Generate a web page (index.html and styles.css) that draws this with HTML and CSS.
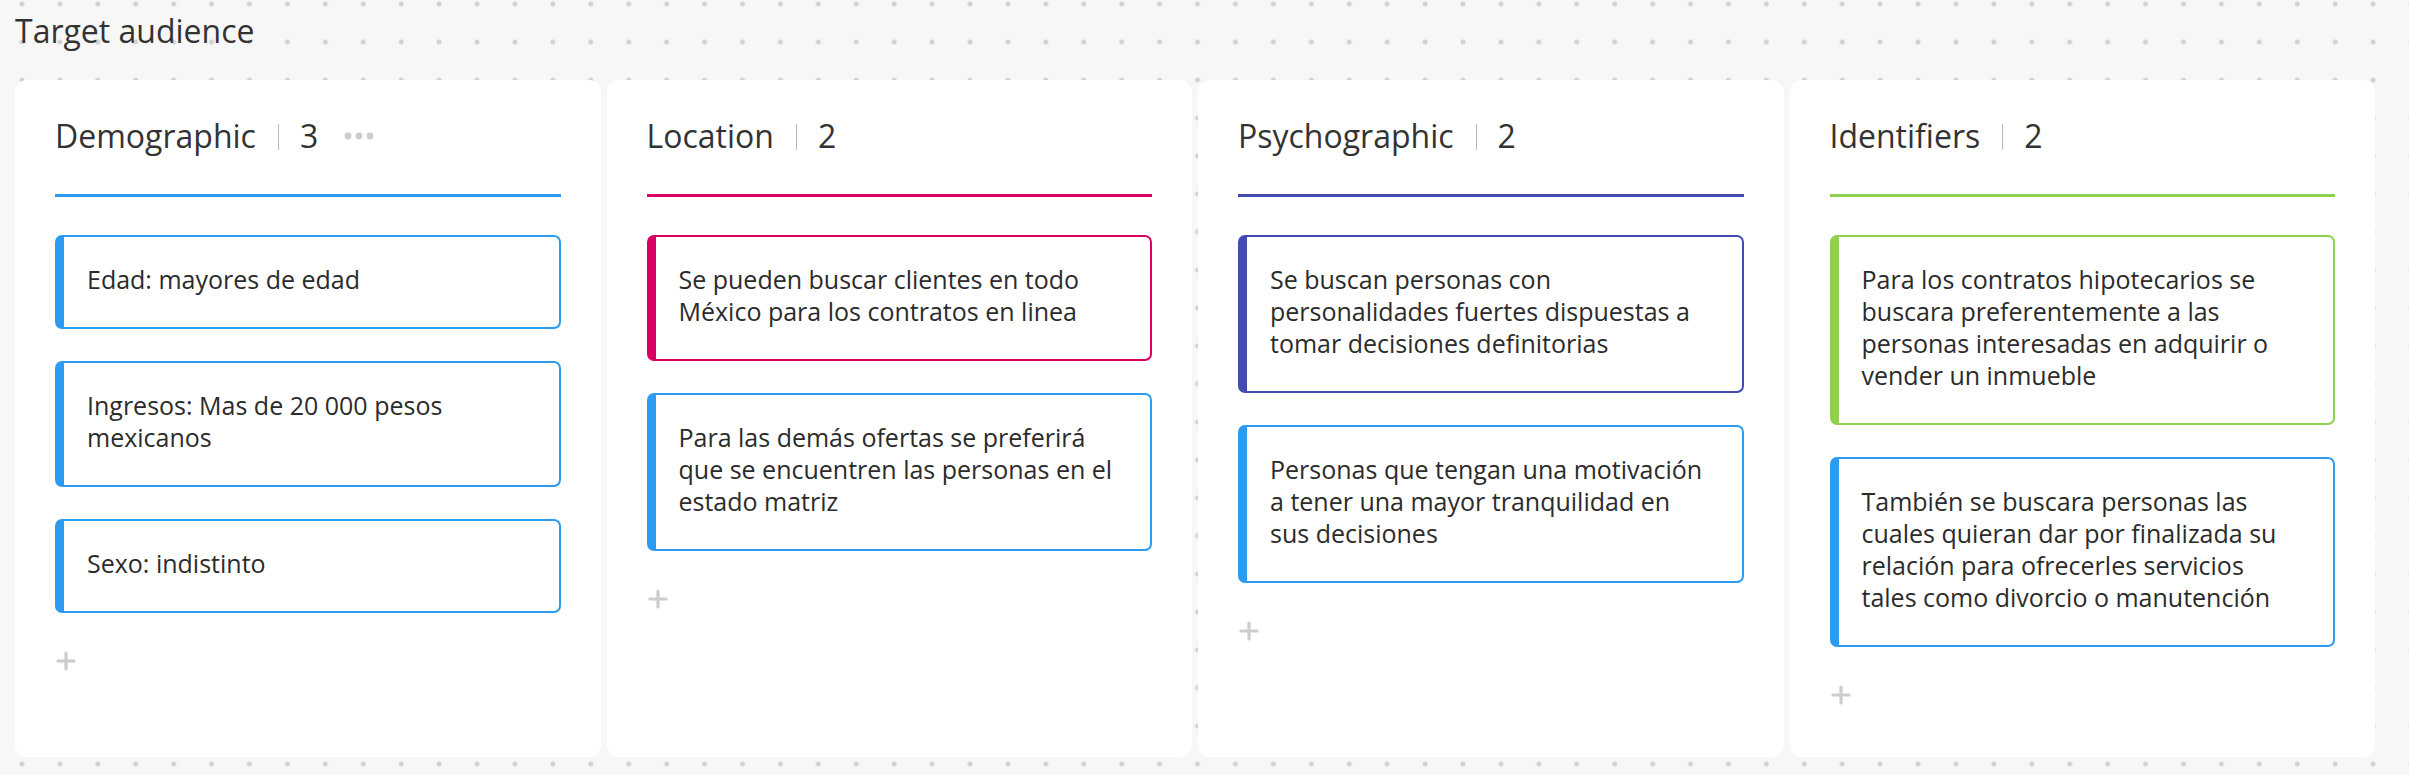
FILE: index.html
```html
<!DOCTYPE html>
<html lang="es">
<head>
<meta charset="utf-8">
<title>Target audience</title>
<meta name="viewport" content="width=device-width, initial-scale=1">
<link rel="stylesheet" href="styles.css">
</head>
<body>
<main class="board">
  <h1 class="board-title">Target audience</h1>
  <div class="columns">
    <section class="column blue">
      <header class="column-head">
        <h2 class="column-title">Demographic</h2>
        <span class="count">3</span>
        <button class="more" type="button" aria-label="More options">
          <svg width="30" height="8" viewBox="0 0 30 8" fill="currentColor"><circle cx="4" cy="4" r="3.4"/><circle cx="15" cy="4" r="3.4"/><circle cx="26" cy="4" r="3.4"/></svg>
        </button>
      </header>
      <ul class="cards">
        <li class="card blue">Edad: mayores de edad</li>
        <li class="card blue">Ingresos: Mas de 20 000 pesos mexicanos</li>
        <li class="card blue">Sexo: indistinto</li>
      </ul>
      <button class="add" type="button" aria-label="Add card">
        <svg width="20" height="20" viewBox="0 0 20 20" fill="none" stroke="currentColor" stroke-width="3.2" stroke-linecap="round"><path d="M10 2v16M2 10h16"/></svg>
      </button>
    </section>
    <section class="column pink">
      <header class="column-head">
        <h2 class="column-title">Location</h2>
        <span class="count">2</span>
      </header>
      <ul class="cards">
        <li class="card pink">Se pueden buscar clientes en todo México para los contratos en linea</li>
        <li class="card blue">Para las demás ofertas se preferirá que se encuentren las personas en el estado matriz</li>
      </ul>
      <button class="add" type="button" aria-label="Add card">
        <svg width="20" height="20" viewBox="0 0 20 20" fill="none" stroke="currentColor" stroke-width="3.2" stroke-linecap="round"><path d="M10 2v16M2 10h16"/></svg>
      </button>
    </section>
    <section class="column indigo">
      <header class="column-head">
        <h2 class="column-title">Psychographic</h2>
        <span class="count">2</span>
      </header>
      <ul class="cards">
        <li class="card indigo">Se buscan personas con personalidades fuertes dispuestas a tomar decisiones definitorias</li>
        <li class="card blue">Personas que tengan una motivación a tener una mayor tranquilidad en sus decisiones</li>
      </ul>
      <button class="add" type="button" aria-label="Add card">
        <svg width="20" height="20" viewBox="0 0 20 20" fill="none" stroke="currentColor" stroke-width="3.2" stroke-linecap="round"><path d="M10 2v16M2 10h16"/></svg>
      </button>
    </section>
    <section class="column green">
      <header class="column-head">
        <h2 class="column-title">Identifiers</h2>
        <span class="count">2</span>
      </header>
      <ul class="cards">
        <li class="card green">Para los contratos hipotecarios se buscara preferentemente a las personas interesadas en adquirir o vender un inmueble</li>
        <li class="card blue">También se buscara personas las cuales quieran dar por finalizada su relación para ofrecerles servicios tales como divorcio o manutención</li>
      </ul>
      <button class="add" type="button" aria-label="Add card">
        <svg width="20" height="20" viewBox="0 0 20 20" fill="none" stroke="currentColor" stroke-width="3.2" stroke-linecap="round"><path d="M10 2v16M2 10h16"/></svg>
      </button>
    </section>
  </div>
</main>
</body>
</html>
```
FILE: styles.css
```css
* {
  box-sizing: border-box;
  margin: 0;
  padding: 0;
}

body {
  font-family: "Open Sans", "Noto Sans", sans-serif;
  background: #f7f7f7;
  color: #333;
}

.blue { --accent: #2d9bf0; }
.pink { --accent: #da0063; }
.indigo { --accent: #414bb2; }
.green { --accent: #8fd14f; }

/* The dot grid is measured from the content box, and rounds to whole tiles across it. */
.board {
  display: flex;
  flex-direction: column;
  min-height: 100vh;
  padding: 9px 16px 18px 3px;
  background-color: #f7f7f7;
  background-image: radial-gradient(circle, #d2d2d2 2px, transparent 3px);
  background-size: 38px 38px;
  background-position: 0 14px;
  background-repeat: round repeat;
  background-origin: content-box;
  background-clip: border-box;
}

.board-title {
  padding-left: 12px;
  font-size: 32px;
  font-weight: 400;
  line-height: 44px;
}

.columns {
  display: grid;
  grid-template-columns: repeat(4, minmax(0, 1fr));
  gap: 6px;
  flex: 1;
  margin-top: 27px;
  padding: 0 18px 0 12px;
}

.column {
  padding: 34px 40px 40px;
  border-radius: 12px;
  background: #fff;
}

.column-head {
  display: flex;
  align-items: center;
  padding-bottom: 36px;
  border-bottom: 3px solid var(--accent);
}

.column-title,
.count {
  font-size: 32px;
  font-weight: 400;
  line-height: 44px;
}

.column-title::after {
  content: "";
  display: inline-block;
  width: 1px;
  height: 26px;
  margin: 0 21px 0 22px;
  vertical-align: -2px;
  background: #bbb;
}

.more,
.add {
  display: flex;
  border: 0;
  background: none;
  color: #ccc;
  cursor: pointer;
}

.more {
  margin-left: 26px;
}

.cards {
  display: flex;
  flex-direction: column;
  gap: 32px;
  margin-top: 38px;
  list-style: none;
}

.card {
  padding: 26px 34px 32px 23px;
  border: 2px solid var(--accent);
  border-left-width: 9px;
  border-radius: 7px;
  background: #fff;
  color: #2b2b2b;
  font-size: 25px;
  line-height: 32px;
}

.add {
  margin: 38px 0 0 1px;
}
```
